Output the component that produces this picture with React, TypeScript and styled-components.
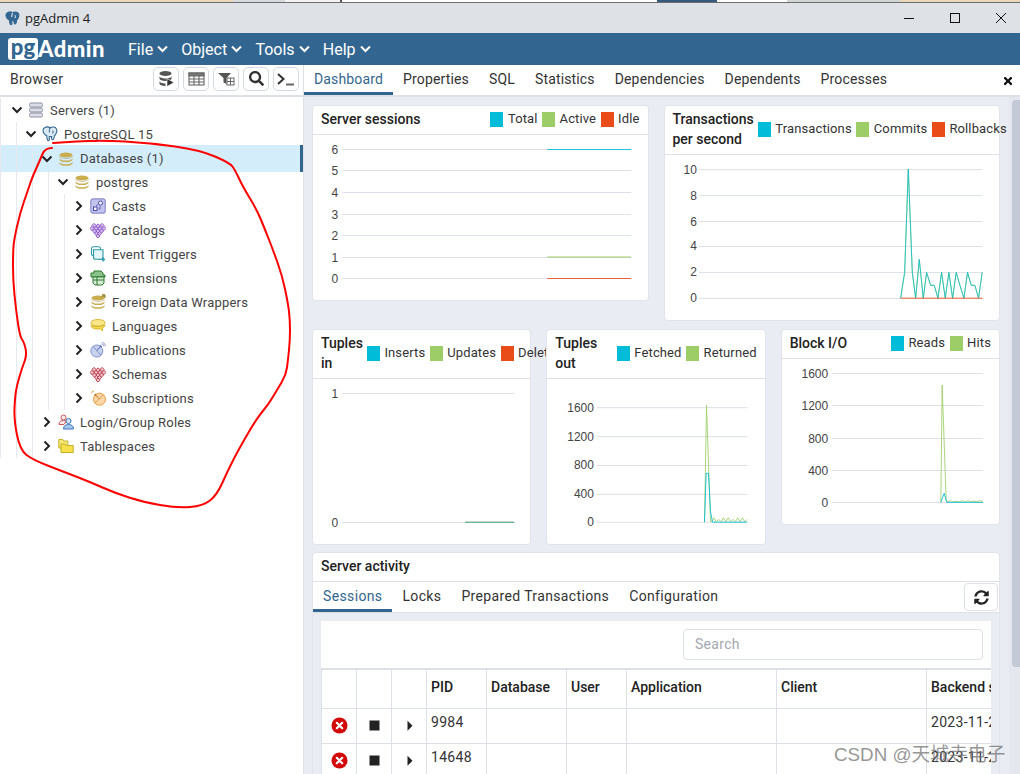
import React from 'react';
import styled, { createGlobalStyle } from 'styled-components';
import { FaSearch, FaTimes, FaSyncAlt } from 'react-icons/fa';

const Global = createGlobalStyle`
  html, body { margin: 0; padding: 0; height: 774px; overflow: hidden; background: #fff; }
  body { font-family: Roboto, "Liberation Sans", sans-serif; color: #222; }
  * { box-sizing: border-box; }
`;

const Page = styled.div`width: 1020px; height: 774px; display: flex; flex-direction: column; overflow: hidden; position: relative;`;

/* ---- desktop strip and window title ---- */
const DesktopStrip = styled.div`height: 3px; display: flex; flex: none; border-bottom: 1px solid #6b6d70;`;
const StripPart = styled.div<{ $w: number; $c: string }>`width: ${p => p.$w}px; background: ${p => p.$c};`;
const TitleBar = styled.div`height: 30px; flex: none; background: #dee1e6; display: flex; align-items: center; padding-left: 5px;`;
const TitleText = styled.span`font-family: "Open Sans", "Liberation Sans", sans-serif; font-size: 13px; margin-left: 5px; color: #1b1b1b; flex: 1;`;
const WinControls = styled.div`display: flex; align-items: center; gap: 30px; padding-right: 11px;`;
const WinButton = styled.svg`width: 16px; height: 16px; display: block; fill: none; stroke: #111; stroke-width: 1;`;

/* ---- navbar ---- */
const NavBar = styled.nav`height: 32px; flex: none; background: #326690; display: flex; align-items: center; padding-left: 8px; color: #fff;`;
const Logo = styled.div`display: flex; align-items: center; width: 120px; font-family: Lato, Roboto, sans-serif; font-weight: 900; font-size: 22px;`;
const LogoPg = styled.span`background: #fff; color: #326690; border-radius: 3px; height: 22px; width: 30px; line-height: 18px; text-align: center;`;
const LogoAdmin = styled.span`letter-spacing: 0.5px; margin-top: -2px;`;
const NavItem = styled.div`display: flex; align-items: center; font-size: 16px; gap: 4px; margin-right: 13.2px;`;
const NavChevron = styled.svg`width: 11px; height: 8px; fill: none; stroke: #fff; stroke-width: 2;`;

/* ---- main layout ---- */
const Main = styled.div`flex: 1; display: flex; min-height: 0;`;
const Sidebar = styled.aside`width: 304px; flex: none; border-right: 1px solid #dde0e6; display: flex; flex-direction: column;`;
const PanelHead = styled.div`height: 32px; flex: none; display: flex; align-items: center; justify-content: space-between; padding: 0 4px 3px 10px; border-bottom: 2px solid #dde0e6;`;
const PanelTitle = styled.span`font-size: 14px; color: #333; letter-spacing: 0.3px;`;
const ToolGroup = styled.div`display: flex; gap: 4px;`;
const ToolButton = styled.div`width: 26px; height: 24px; border: 1px solid #d5d8de; border-radius: 5px; display: flex; align-items: center; justify-content: center; color: #333; font-size: 15px;`;

const Tree = styled.div`flex: 1; padding-top: 1px;`;
const Row = styled.div<{ $d: number; $sel?: boolean }>`
  position: relative;
  display: flex; align-items: center;
  height: ${p => (p.$sel ? 27 : 24)}px;
  margin: ${p => (p.$sel ? '-1px 0 -2px' : '0')};
  padding-left: ${p => (p.$d === 0 ? 9 : p.$d * 16 + 7)}px;
  background: ${p => (p.$sel ? '#d4edfb' : 'transparent')};
  border-right: ${p => (p.$sel ? '3px solid #326690' : '0')};
  font-size: 13px; color: #444; letter-spacing: 0.2px;
  &::before {
    content: ''; position: absolute; left: 0; top: 0; bottom: 0;
    width: ${p => (p.$d + 1) * 16 - 8}px;
    background: repeating-linear-gradient(90deg, #e6e9f0 0 1px, transparent 1px 16px);
  }
`;
const Chevron = styled.svg`position: relative; width: 16px; height: 16px; flex: none; fill: none; stroke: #222; stroke-width: 2;`;
const NodeIcon = styled.svg`position: relative; width: 16px; height: 16px; flex: none; margin-left: 3px;`;
const NodeLabel = styled.span`position: relative; margin-left: 6px; white-space: nowrap;`;

/* ---- right side ---- */
const Right = styled.section`flex: 1; display: flex; flex-direction: column; min-width: 0;`;
const TabBar = styled.div`height: 32px; flex: none; display: flex; border-bottom: 2px solid #dde0e6; position: relative;`;
const Tab = styled.div<{ $on?: boolean; $sp?: number }>`
  height: 30px; padding: 0 10px; display: flex; align-items: center; font-size: 14px; letter-spacing: ${p => p.$sp ?? 0.15}px; white-space: nowrap;
  color: ${p => (p.$on ? '#326690' : '#333')};
  border-bottom: 3px solid ${p => (p.$on ? '#326690' : 'transparent')};
`;
const CloseTab = styled.div`position: absolute; right: 6px; top: 10px; font-size: 12px; color: #111; line-height: 0;`;
const Content = styled.div`flex: 1; min-height: 0; display: flex; background: #e9ecf2;`;
const Dashboard = styled.div`width: 705px; flex: none; padding: 9px 0 0 9px; display: flex; flex-direction: column; overflow: hidden;`;
const ScrollTrack = styled.div`flex: 1; background: #e4e7ee; display: flex; justify-content: flex-end; padding-top: 3px;`;
const ScrollThumb = styled.div`width: 8px; height: 567px; background: #c4cad5; border-radius: 4px 0 0 4px;`;
const GraphGrid = styled.div<{ $n: number; $m: number }>`display: grid; grid-template-columns: repeat(${p => p.$n}, minmax(0, 1fr)); gap: 17px; width: 686px; align-items: start; margin-bottom: ${p => p.$m}px; flex: none;`;
const Card = styled.div`position: relative; background: #fff; border-radius: 3px; box-shadow: 0 0 0 1px #e1e4ea;`;
const CardHead = styled.div`display: flex; justify-content: space-between; align-items: center; gap: 4px; padding: 3px 8px 5px; border-bottom: 1px solid #dde0e6; min-height: 29px;`;
const CardTitle = styled.div`font-size: 14px; font-weight: 500; line-height: 20px; color: #222;`;
const Legend = styled.div`display: flex; flex: none; align-items: center; gap: 4.5px;`;
const Swatch = styled.span<{ $c: string }>`width: 13px; height: 15px; background: ${p => p.$c}; margin-right: 4.5px; flex: none;`;
const LegendText = styled.span`font-size: 13px; letter-spacing: 0.12px; line-height: 20px; color: #333; white-space: nowrap;`;
const LegendItem = styled.div`display: flex; align-items: center;`;
const ChartBox = styled.svg`display: block; width: 100%; height: 165px;`;
const AxisLabel = styled.text`font-family: "Liberation Sans", Arial, sans-serif; font-size: 12px; fill: #444; text-anchor: end;`;

const Activity = styled(Card)`width: 686px; flex: none;`;
const SubTabs = styled.div`height: 31px; display: flex; border-bottom: 1px solid #dde0e6; position: relative;`;
const RefreshBtn = styled.div`position: absolute; right: 1px; top: 1px; width: 34px; height: 28px; border: 1px solid #dde0e6; border-radius: 4px; background: #fff; display: flex; align-items: center; justify-content: center; font-size: 15px; color: #222;`;
const ActivityBody = styled.div`background: #e9ecf2; padding: 8px 8px 0;`;
const TablePanel = styled.div`background: #fff; overflow: hidden;`;
const SearchRow = styled.div`display: flex; justify-content: flex-end; padding: 8px;`;
const SearchBox = styled.div`width: 300px; height: 31px; border: 1px solid #dde0e6; border-radius: 4px; padding: 0 11px 2px; display: flex; align-items: center; font-size: 14px; color: #a3a8b0; letter-spacing: 0.3px;`;
const SessTable = styled.table`border-collapse: collapse; table-layout: fixed; width: 700px; border-top: 2px solid #dde0e6;`;
const Th = styled.th<{ $w: number }>`width: ${p => p.$w}px; height: 39px; border: 1px solid #dde0e6; border-top: 0; text-align: left; padding: 0 4px 3px; font-size: 14px; font-weight: 500; color: #222; white-space: nowrap; overflow: hidden;`;
const Td = styled.td`height: 35px; border: 1px solid #dde0e6; padding: 3px 4px 0; vertical-align: top; font-size: 14px; letter-spacing: 0.3px; color: #333; white-space: nowrap; overflow: hidden; line-height: 20px;`;
const IconTd = styled(Td)`padding: 0; vertical-align: middle; text-align: center; line-height: 0;`;
const RowIcon = styled.svg`width: 17px; height: 17px; display: inline-block;`;

const Scribble = styled.svg`position: absolute; left: 0; top: 0; width: 320px; height: 520px; pointer-events: none; fill: none; stroke: #f00; stroke-width: 2; stroke-linejoin: round; stroke-linecap: round;`;
const Watermark = styled.div`position: absolute; left: 834px; top: 743px; font-size: 18.8px; line-height: 24px; color: rgba(110,110,110,0.72); font-family: "Liberation Sans", "Noto Sans CJK SC", sans-serif; white-space: nowrap;`;

/* ---- icons ---- */
const Elephant = ({ size = 16, dark = false }: { size?: number; dark?: boolean }) => (
  <svg width={size} height={size} viewBox="0 0 16 16" style={{ flex: 'none', position: 'relative' }}>
    <path d="M3 1.500C5 .5 7 1.200 8 2c1.200-1 4-1.400 5.600-.2 1.600 1.400 1.200 4.200.3 6-.5 1-1 1.700-1.500 2 0 1.400-.4 3-1.300 3.800-.9.6-1.500-.3-1.500-1.500V10.500H7.300v3.300C7.300 15 6 15 5.500 14c-.5-1-.7-3-.7-4.300C3 9.300 1 6.500 1 4.400 1 3 1.800 2 3 1.500Z" fill={dark ? '#336791' : '#dbe9f3'} stroke="#336791" strokeWidth="1.100" />
    <path d="M8 2c-.6 1.500-.8 3-.7 4.500M10.800 4.500c.4 1 .4 2-.1 3" fill="none" stroke={dark ? '#fff' : '#336791'} strokeWidth="1" />
  </svg>
);
const Coins = ({ c = '#c9ad4f', d = '#8a7a35' }: { c?: string; d?: string }) => (
  <>
    <ellipse cx="8" cy="4" rx="6.500" ry="2.600" fill={c} />
    <path d="M1.500 7c0 1.500 2.900 2.600 6.500 2.600s6.500-1.100 6.500-2.600v1.500c0 1.500-2.900 2.600-6.500 2.600s-6.500-1.100-6.500-2.600Z" fill={c} />
    <path d="M1.500 10.700c0 1.500 2.900 2.600 6.500 2.600s6.500-1.100 6.500-2.600v1.500c0 1.500-2.900 2.600-6.500 2.600s-6.500-1.100-6.500-2.600Z" fill={c} />
    <path d="M1.500 5c0 1.400 2.900 2.500 6.500 2.500S14.500 6.400 14.500 5" fill="none" stroke={d} strokeWidth=".4" />
  </>
);
const diamonds = (c: string, f: string) => (
  <>
    {[[4, 3.500], [12, 3.500], [8, 4], [6, 6.500], [10, 6.500], [2, 6.500], [14, 6.500], [8, 9], [4.500, 9], [11.500, 9], [6.500, 11.500], [9.500, 11.500], [8, 14]].map(([x, y], i) => (
      <rect key={i} x={x - 1.500} y={y - 1.500} width="3" height="3" transform={`rotate(45 ${x} ${y})`} fill={f} stroke={c} strokeWidth=".9" />
    ))}
  </>
);
const nodeIcons: Record<string, React.ReactNode> = {
  servers: (
    <>
      {[1, 6, 11].map(y => <rect key={y} x="1.500" y={y} width="13" height="4" rx="1.500" fill="#dcdde6" stroke="#8f92a5" strokeWidth="1" />)}
    </>
  ),
  db: <Coins />,
  casts: (
    <>
      <rect x=".8" y=".8" width="14.400" height="14.400" rx="2.500" fill="#c3c3ee" stroke="#8e8ed0" strokeWidth="1.200" />
      <circle cx="10.500" cy="5" r="2" fill="#fff" stroke="#4b4ba8" strokeWidth="1" />
      <rect x="3.500" y="9" width="3.500" height="3.500" fill="#fff" stroke="#4b4ba8" strokeWidth="1" />
      <path d="M6 8l2.500-2M10 8v3H8.500" fill="none" stroke="#4b4ba8" strokeWidth=".8" />
    </>
  ),
  catalogs: diamonds('#8a57c4', '#d2b8ee'),
  triggers: (
    <>
      <rect x="1.500" y=".8" width="9" height="9" rx="2" fill="#fff" stroke="#2f9aa8" strokeWidth="1.100" />
      <path d="M3.500 3.800h9.500v7.500a2 2 0 0 1-2 2H5.500a2 2 0 0 1-2-2Z" fill="#e3f6f8" stroke="#2f9aa8" strokeWidth="1.100" />
      <path d="M8 13.500h6M12.800 11.500l2.200 2-2.200 2Z" fill="#2f9aa8" stroke="#2f9aa8" strokeWidth=".7" />
    </>
  ),
  extensions: (
    <>
      <path d="M4 1h7l2 2v2h2v2H1V3h3Z" fill="#8cc28c" stroke="#2c7a2c" strokeWidth="1" />
      <path d="M3 7h11v6l-2 2H5l-2-2Z" fill="#d5ebd5" stroke="#2c7a2c" strokeWidth="1" />
      <path d="M3 10h11M7 7v8" stroke="#2c7a2c" strokeWidth="1" />
    </>
  ),
  fdw: (
    <>
      <Coins c="#c9ad4f" />
      <path d="M11 3.500l3-2.500M12 .8h3v3Z" fill="#a08a3a" stroke="#a08a3a" strokeWidth="1" />
    </>
  ),
  languages: (
    <>
      <ellipse cx="8" cy="4.800" rx="7" ry="3.300" fill="#fbe88a" stroke="#d6b92d" strokeWidth="1" />
      <path d="M1 7.500c0 2.200 2.800 3.500 6.500 3.500 1 0 1.900-.1 2.700-.3l2.300 2.300v-3.200c1.600-.6 2.500-1.500 2.500-2.800-3 2-11 2-14 .5Z" fill="#f8dc4f" stroke="#d6b92d" strokeWidth="1" />
    </>
  ),
  publications: (
    <>
      <circle cx="6.800" cy="9" r="6" fill="#c8d2ef" stroke="#7f91cc" strokeWidth="1" />
      <path d="M3 4.500l8 8.500" stroke="#7f91cc" strokeWidth="1" />
      <path d="M7 8.500l3.500-4" stroke="#4d63b8" strokeWidth="1" />
      <circle cx="10.800" cy="4.200" r="1" fill="#4d63b8" />
      <path d="M11.500 1.800a2.800 2.800 0 0 1 2.500 2.700M12 .3a4.200 4.200 0 0 1 3.500 3.700" fill="none" stroke="#7f91cc" strokeWidth=".8" />
    </>
  ),
  schemas: diamonds('#b83c4c', '#f0c2c8'),
  subscriptions: (
    <>
      <circle cx="9.500" cy="9.200" r="6" fill="#fbd7a8" stroke="#e69a3d" strokeWidth="1" />
      <path d="M13.500 4.700l-8.500 8.500" stroke="#e69a3d" strokeWidth="1" />
      <path d="M9 8.800L5.500 5" stroke="#b8742a" strokeWidth="1" />
      <circle cx="5.300" cy="4.800" r="1" fill="#b8742a" />
      <path d="M1.300 3.300a2.800 2.800 0 0 1 2.700-2.300" fill="none" stroke="#e69a3d" strokeWidth=".9" />
    </>
  ),
  roles: (
    <>
      <circle cx="5.500" cy="3.500" r="2.500" fill="#fdeaea" stroke="#c8545a" strokeWidth="1" />
      <path d="M1 10.500c0-3 2-4 4.500-4 1 0 2 .2 2.700.7L6 10.500Z" fill="#fdeaea" stroke="#c8545a" strokeWidth="1" />
      <circle cx="10.500" cy="7" r="2.500" fill="#d5e6f8" stroke="#3f74ba" strokeWidth="1" />
      <path d="M5.500 15c0-3 2-4.500 5-4.500s5 1.500 5 4.500Z" fill="#a5c8ee" stroke="#3f74ba" strokeWidth="1" />
    </>
  ),
  tablespaces: (
    <>
      <path d="M.8 1.500h4l1 1.500h4v7H.8Z" fill="#f7e87c" stroke="#c6b023" strokeWidth="1" />
      <path d="M3 6h4l1 1.500h7.200v7H3Z" fill="#f7e04e" stroke="#c6b023" strokeWidth="1" />
    </>
  ),
};

type Node = { d: number; label: string; icon?: string; open?: boolean; sel?: boolean };
const nodes: Node[] = [
  { d: 0, label: 'Servers (1)', icon: 'servers', open: true },
  { d: 1, label: 'PostgreSQL 15', open: true },
  { d: 2, label: 'Databases (1)', icon: 'db', open: true, sel: true },
  { d: 3, label: 'postgres', icon: 'db', open: true },
  { d: 4, label: 'Casts', icon: 'casts' },
  { d: 4, label: 'Catalogs', icon: 'catalogs' },
  { d: 4, label: 'Event Triggers', icon: 'triggers' },
  { d: 4, label: 'Extensions', icon: 'extensions' },
  { d: 4, label: 'Foreign Data Wrappers', icon: 'fdw' },
  { d: 4, label: 'Languages', icon: 'languages' },
  { d: 4, label: 'Publications', icon: 'publications' },
  { d: 4, label: 'Schemas', icon: 'schemas' },
  { d: 4, label: 'Subscriptions', icon: 'subscriptions' },
  { d: 2, label: 'Login/Group Roles', icon: 'roles' },
  { d: 2, label: 'Tablespaces', icon: 'tablespaces' },
];

/* ---- charts ---- */
const CY = '#00bcd9', GR = '#9dcd66', OR = '#e94c18';
type Series = { c: string; pts: number[][]; o?: number };
type ChartDef = { box: string; x0: number; x1: number; labelX: number; grid: [string, number][]; series: Series[] };

const txZ = [780, 792, 803, 815, 825, 836, 848, 858, 870, 881, 892, 903, 914, 925, 936, 947, 958, 970, 981, 992, 1003, 1014, 1025];
const txV = [0, 2, 10, 2, 0, 3, 0, 2, 1, 1, 0, 2, 0, 2, 0, 2, 1, 0, 2, 1, 1, 0, 2];
const txPts = txZ.map((z, i) => [640 + z / 3, 298.3 - txV[i] * 12.93]);
const z3 = (bx: number, by: number, a: number[][]) => a.map(([x, y]) => [bx + x / 3, by + y / 3]);
const wiggle = (from: number, to: number, step: number, base: number, amp: number) => {
  const r: number[][] = [];
  let i = 0;
  for (let x = from; x <= to; x += step) { r.push([x, base - (i % 2 ? amp * (i % 3 === 0 ? 0.6 : 1) : 0)]); i++; }
  return r;
};

const charts: Record<string, ChartDef> = {
  sessions: {
    box: '313 135 334 165', x0: 342, x1: 631, labelX: 338,
    grid: [['6', 149.5], ['5', 170.5], ['4', 192.5], ['3', 214.5], ['2', 235.5], ['1', 257.5], ['0', 278.5]],
    series: [
      { c: CY, pts: [[547, 149.5], [631, 149.5]] },
      { c: GR, pts: [[547, 257], [631, 257]], o: 1 },
      { c: OR, pts: [[547, 278.5], [631, 278.5]] },
    ],
  },
  tx: {
    box: '664 155 335 165', x0: 698, x1: 982, labelX: 696,
    grid: [['10', 169.5], ['8', 195.5], ['6', 221.5], ['4', 246.5], ['2', 272.5], ['0', 298.5]],
    series: [
      { c: GR, pts: txPts },
      { c: CY, pts: txPts, o: 0.75 },
      { c: OR, pts: [[900, 298.3], [982, 298.3]] },
    ],
  },
  tin: {
    box: '313 379 217 165', x0: 342, x1: 514, labelX: 338,
    grid: [['1', 393.5], ['0', 522.5]],
    series: [
      { c: OR, pts: [[465, 522.3], [514, 522.3]] },
      { c: GR, pts: [[465, 522.3], [514, 522.3]] },
      { c: CY, pts: [[465, 522.3], [514, 522.3]], o: 0.6 },
    ],
  },
  tout: {
    box: '547 379 218 165', x0: 597, x1: 748, labelX: 594,
    grid: [['1600', 407.5], ['1200', 436.5], ['800', 465.5], ['400', 494.5], ['0', 522.5]],
    series: [
      { c: GR, pts: [...z3(305, 325, [[1200, 592], [1206, 240], [1218, 590]]), ...wiggle(712, 748, 2.400, 522, 4)] },
      { c: CY, pts: z3(305, 325, [[1200, 592], [1205, 445], [1212, 445], [1218, 560], [1224, 592], [1328, 592]]) },
    ],
  },
  block: {
    box: '782 359 217 165', x0: 832, x1: 983, labelX: 828,
    grid: [['1600', 373.5], ['1200', 405.5], ['800', 438.5], ['400', 470.5], ['0', 502.5]],
    series: [
      { c: GR, pts: [...z3(770, 325, [[512, 532], [516, 180], [528, 525]]), ...wiggle(947, 983, 3, 502, 1.500)] },
      { c: CY, pts: z3(770, 325, [[512, 532], [522, 505], [530, 532], [638, 532]]) },
    ],
  },
};

const Chart = ({ def }: { def: ChartDef }) => (
  <ChartBox viewBox={def.box}>
    {def.grid.map(([l, y]) => (
      <g key={l}>
        <line x1={def.x0} x2={def.x1} y1={y} y2={y} stroke="#dde0e8" strokeWidth="1" />
        <AxisLabel x={def.labelX} y={y + 4}>{l}</AxisLabel>
      </g>
    ))}
    {def.series.map((s, i) => (
      <polyline key={i} points={s.pts.map(p => p.join(',')).join(' ')} fill="none" stroke={s.c} strokeOpacity={s.o ?? 0.85} strokeWidth="1" />
    ))}
  </ChartBox>
);

const GraphCard = ({ title, legend, def }: { title: string; legend: [string, string][]; def: ChartDef }) => (
  <Card>
    <CardHead>
      <CardTitle>{title}</CardTitle>
      <Legend>
        {legend.map(([c, t]) => (
          <LegendItem key={t}><Swatch $c={c} /><LegendText>{t}</LegendText></LegendItem>
        ))}
      </Legend>
    </CardHead>
    <Chart def={def} />
  </Card>
);

const CloseCircle = () => (
  <RowIcon viewBox="0 0 17 17">
    <circle cx="8.500" cy="8.500" r="8" fill="#d20a0a" />
    <path d="M5.800 5.800l5.400 5.400M11.200 5.800l-5.400 5.400" stroke="#fff" strokeWidth="2.200" strokeLinecap="round" />
  </RowIcon>
);
const StopIcon = () => <RowIcon viewBox="0 0 17 17"><rect x="3.500" y="3.500" width="10" height="10" fill="#222" /></RowIcon>;
const CaretIcon = () => <RowIcon viewBox="0 0 17 17"><path d="M6.500 3.800l5 5-5 5Z" fill="#222" /></RowIcon>;

const colW = [35, 35, 35, 60, 80, 60, 150, 150, 95];
const cols = ['', '', '', 'PID', 'Database', 'User', 'Application', 'Client', 'Backend start'];
const sessions = [['9984', '2023-11-28 10:00:00'], ['14648', '2023-11-28 10:00:00']];

const scribblePts = [
  [52, 148], [45, 148], [40, 160], [32, 178], [28, 190], [20, 213], [14, 240], [13, 253], [13, 280], [16, 310], [20, 337],
  [24, 342], [27, 355], [22, 368], [17, 385], [15, 397], [14, 420], [20, 450], [33, 460], [67, 473], [90, 482], [115, 493],
  [143, 502], [177, 508], [203, 506], [217, 495], [228, 470], [240, 447], [257, 418], [268, 405], [277, 390], [286, 375],
  [288, 360], [290, 340], [290, 320], [288, 303], [282, 275], [273, 250], [266, 232], [257, 210], [243, 187], [235, 170],
  [230, 163], [200, 150], [150, 143], [100, 140], [53, 143],
];
const scribblePath = scribblePts.reduce((d, p, i, a) => {
  if (i === 0) return `M${p[0]} ${p[1]}`;
  if (i === a.length - 1) return `${d} L${p[0]} ${p[1]}`;
  const n = a[i + 1];
  return `${d} Q${p[0]} ${p[1]} ${(p[0] + n[0]) / 2} ${(p[1] + n[1]) / 2}`;
}, '');

export default function App() {
  return (
    <Page>
      <Global />
      <DesktopStrip>
        <StripPart $w={233} $c="#ecd6b8" />
        <StripPart $w={52} $c="#d7d9dc" />
        <StripPart $w={55} $c="#f4f4f4" />
        <StripPart $w={2} $c="#555" />
        <StripPart $w={315} $c="#fff" />
        <StripPart $w={60} $c="#35587d" />
        <StripPart $w={70} $c="#fff" />
        <StripPart $w={113} $c="#d3d4d6" />
        <StripPart $w={120} $c="#ecd6b8" />
      </DesktopStrip>
      <TitleBar>
        <Elephant size={15} dark />
        <TitleText>pgAdmin 4</TitleText>
        <WinControls>
          <WinButton viewBox="0 0 16 16"><path d="M3 8.500h10" /></WinButton>
          <WinButton viewBox="0 0 16 16"><rect x="3.500" y="3.500" width="9" height="9" /></WinButton>
          <WinButton viewBox="0 0 16 16"><path d="M3 3l10 10M13 3L3 13" /></WinButton>
        </WinControls>
      </TitleBar>
      <NavBar>
        <Logo><LogoPg>pg</LogoPg><LogoAdmin>Admin</LogoAdmin></Logo>
        {['File', 'Object', 'Tools', 'Help'].map(m => (
          <NavItem key={m}>{m}<NavChevron viewBox="0 0 11 8"><path d="M1 1.500l4.500 4.500L10 1.500" /></NavChevron></NavItem>
        ))}
      </NavBar>
      <Main>
        <Sidebar>
          <PanelHead>
            <PanelTitle>Browser</PanelTitle>
            <ToolGroup>
              <ToolButton>
                <svg width="17" height="17" viewBox="0 0 17 17">
                  <ellipse cx="7.500" cy="3.500" rx="6" ry="2.500" fill="#555" />
                  <path d="M1.500 6c0 1.400 2.700 2.500 6 2.500s6-1.100 6-2.500v2.500c0 1.400-2.700 2.500-6 2.500s-6-1.100-6-2.500Z" fill="#555" />
                  <path d="M1.500 11c0 1.400 2.700 2.500 6 2.500v2.500c-3.300 0-6-1-6-2.500Z" fill="#555" />
                  <path d="M9 8.500l7 4-7 4Z" fill="#333" stroke="#fff" strokeWidth=".6" />
                </svg>
              </ToolButton>
              <ToolButton>
                <svg width="17" height="15" viewBox="0 0 17 15" fill="none" stroke="#666" strokeWidth="1.100">
                  <rect x="1" y="2" width="15" height="12" /><path d="M1 2h15v3H1Z" fill="#777" /><path d="M1 8h15M1 11h15M6 5v9M11 5v9" />
                </svg>
              </ToolButton>
              <ToolButton>
                <svg width="18" height="16" viewBox="0 0 18 16">
                  <path d="M1 2h13L9.500 7v6l-3-1.500V7Z" fill="#555" />
                  <rect x="10" y="7" width="7" height="7" fill="#fff" stroke="#666" strokeWidth="1" />
                  <path d="M10 10.500h7M13.500 7v7" stroke="#666" strokeWidth="1" />
                </svg>
              </ToolButton>
              <ToolButton><FaSearch /></ToolButton>
              <ToolButton>
                <svg width="20" height="14" viewBox="0 0 20 14" fill="none" stroke="#333" strokeWidth="2">
                  <path d="M2 2l5.500 5L2 12" /><path d="M10 12.500h8" stroke="#666" />
                </svg>
              </ToolButton>
            </ToolGroup>
          </PanelHead>
          <Tree>
            {nodes.map(n => (
              <Row key={n.label} $d={n.d} $sel={n.sel}>
                <Chevron viewBox="0 0 16 16">
                  <path d={n.open ? 'M3.500 5.500L8 10l4.500-4.500' : 'M5.500 3.500L10 8l-4.500 4.500'} />
                </Chevron>
                {n.icon ? <NodeIcon viewBox="0 0 16 16">{nodeIcons[n.icon]}</NodeIcon> : <NodeIcon as="span"><Elephant /></NodeIcon>}
                <NodeLabel>{n.label}</NodeLabel>
              </Row>
            ))}
          </Tree>
        </Sidebar>
        <Right>
          <TabBar>
            {['Dashboard', 'Properties', 'SQL', 'Statistics', 'Dependencies', 'Dependents', 'Processes'].map((t, i) => (
              <Tab key={t} $on={i === 0}>{t}</Tab>
            ))}
            <CloseTab><FaTimes /></CloseTab>
          </TabBar>
          <Content>
            <Dashboard>
              <GraphGrid $n={2} $m={10}>
                <GraphCard title="Server sessions" legend={[[CY, 'Total'], [GR, 'Active'], [OR, 'Idle']]} def={charts.sessions} />
                <GraphCard title="Transactions per second" legend={[[CY, 'Transactions'], [GR, 'Commits'], [OR, 'Rollbacks']]} def={charts.tx} />
              </GraphGrid>
              <GraphGrid $n={3} $m={9}>
                <GraphCard title="Tuples in" legend={[[CY, 'Inserts'], [GR, 'Updates'], [OR, 'Deletes']]} def={charts.tin} />
                <GraphCard title="Tuples out" legend={[[CY, 'Fetched'], [GR, 'Returned']]} def={charts.tout} />
                <GraphCard title="Block I/O" legend={[[CY, 'Reads'], [GR, 'Hits']]} def={charts.block} />
              </GraphGrid>
              <Activity>
                <CardHead><CardTitle>Server activity</CardTitle></CardHead>
                <SubTabs>
                  {['Sessions', 'Locks', 'Prepared Transactions', 'Configuration'].map((t, i) => (
                    <Tab key={t} $on={i === 0} $sp={0.36}>{t}</Tab>
                  ))}
                  <RefreshBtn><FaSyncAlt /></RefreshBtn>
                </SubTabs>
                <ActivityBody>
                  <TablePanel>
                    <SearchRow><SearchBox>Search</SearchBox></SearchRow>
                    <SessTable>
                      <thead>
                        <tr>{cols.map((c, i) => <Th key={i} $w={colW[i]}>{c}</Th>)}</tr>
                      </thead>
                      <tbody>
                        {sessions.map(([pid, start]) => (
                          <tr key={pid}>
                            <IconTd><CloseCircle /></IconTd>
                            <IconTd><StopIcon /></IconTd>
                            <IconTd><CaretIcon /></IconTd>
                            <Td>{pid}</Td><Td /><Td /><Td /><Td /><Td>{start}</Td>
                          </tr>
                        ))}
                      </tbody>
                    </SessTable>
                  </TablePanel>
                </ActivityBody>
              </Activity>
            </Dashboard>
            <ScrollTrack><ScrollThumb /></ScrollTrack>
          </Content>
        </Right>
      </Main>
      <Scribble viewBox="0 0 320 520"><path d={scribblePath} /></Scribble>
      <Watermark>CSDN @天城寺电子</Watermark>
    </Page>
  );
}
